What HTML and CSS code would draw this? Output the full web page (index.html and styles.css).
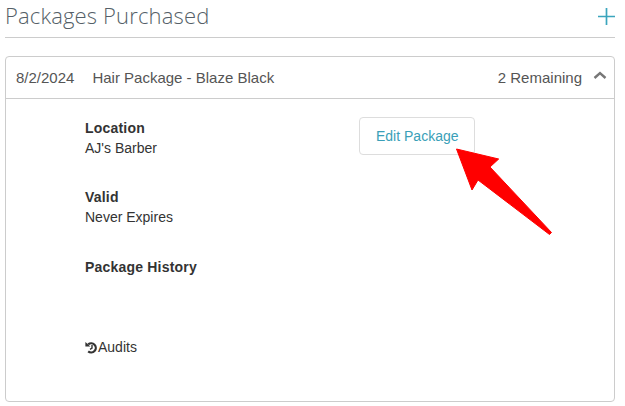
FILE: index.html
```html
<!DOCTYPE html>
<html>

	<head>
		<meta charset="UTF-8">
		<title>Packages Purchased</title>
		<link rel="stylesheet" href="styles.css">
	</head>

	<body>
		<div class="title-row">
			<h2 class="title">Packages Purchased</h2>
			<svg class="add-icon" width="18" height="18" viewBox="0 0 18 18">
				<path d="M9.5 1v17M1 9.5h17" fill="none" stroke="#3ba5bd" stroke-width="1.7"/>
			</svg>
		</div>
		<div class="card">
			<div class="card-head">
				<span class="date">8/2/2024</span>
				<span class="name">Hair Package - Blaze Black</span>
				<span class="remaining">2 Remaining</span>
				<svg class="chevron" width="14" height="9" viewBox="0 0 14 9">
					<path d="M1.5 7L7 2l5.5 5" fill="none" stroke="#777" stroke-width="2.4"/>
				</svg>
			</div>
			<div class="card-body">
				<div class="info">
					<div class="field">
						<div class="label">Location</div>
						<div>AJ's Barber</div>
					</div>
					<div class="field">
						<div class="label">Valid</div>
						<div>Never Expires</div>
					</div>
					<div class="label">Package History</div>
					<div class="audits">
						<svg width="13" height="13" viewBox="0 0 13 13">
							<path d="M3.2 3.4A4.6 4.6 0 1 1 3.2 10.4" fill="none" stroke="#333" stroke-width="2.2"/>
							<path d="M0.4 1L5.4 5.6H0.4z" fill="#333"/>
							<path d="M7 4v3.2l-2 1.2" fill="none" stroke="#333" stroke-width="1.4"/>
						</svg>Audits
					</div>
				</div>
				<a href="javascript:" class="edit-btn">Edit Package</a>
			</div>
		</div>
		<svg class="arrow" width="625" height="406" viewBox="0 0 625 406">
			<path d="M456.5 149L498.7 159 490 167 551.5 232.5 549.5 234.5 478 180 472 190z" fill="#f00" stroke="#f00" stroke-linejoin="round"/>
		</svg>
	</body>

</html>
```

FILE: styles.css
```css
body {
	margin: 0;
	padding: 0 10px 0 5px;
	font-family: "Liberation Sans", Arial, sans-serif;
	font-size: 14px;
	line-height: 20px;
	color: #333;
	background-color: #fff;
}

.title-row {
	display: flex;
	justify-content: space-between;
	align-items: center;
	height: 37px;
	margin-bottom: 18px;
	border-bottom: 1px solid #ccc;
}

.title {
	margin: 0 0 7px;
	font-family: "Open Sans", sans-serif;
	font-size: 22px;
	font-weight: 300;
	letter-spacing: .15px;
	line-height: 30px;
	color: #555f68;
}

.add-icon {
	margin-bottom: 6px;
}

.card {
	height: 346px;
	border: 1px solid #ccc;
	border-radius: 4px;
	box-sizing: border-box;
}

.card-head {
	display: flex;
	align-items: center;
	height: 42px;
	padding: 0 7px 0 10px;
	border-bottom: 1px solid #ccc;
	box-sizing: border-box;
	font-size: 15px;
	color: #555;
}

.date {
	margin-right: 18px;
}

.remaining {
	margin-left: auto;
	margin-right: 11px;
}

.chevron {
	margin-bottom: 5px;
}

.card-body {
	display: flex;
	padding: 19px 0 0 79px;
}

.info {
	width: 274px;
}

.field {
	margin-bottom: 29px;
}

.field + .field {
	margin-bottom: 30px;
}

.label {
	font-weight: bold;
	letter-spacing: .2px;
}

.audits {
	display: flex;
	align-items: center;
	margin-top: 60px;
}

.edit-btn {
	align-self: flex-start;
	margin-top: -1px;
	padding: 8px 15px 8px 16px;
	border: 1px solid #ddd;
	border-radius: 4px;
	color: #3a9fb8;
	text-decoration: none;
}

.arrow {
	position: absolute;
	left: 0;
	top: 0;
	pointer-events: none;
}
```
